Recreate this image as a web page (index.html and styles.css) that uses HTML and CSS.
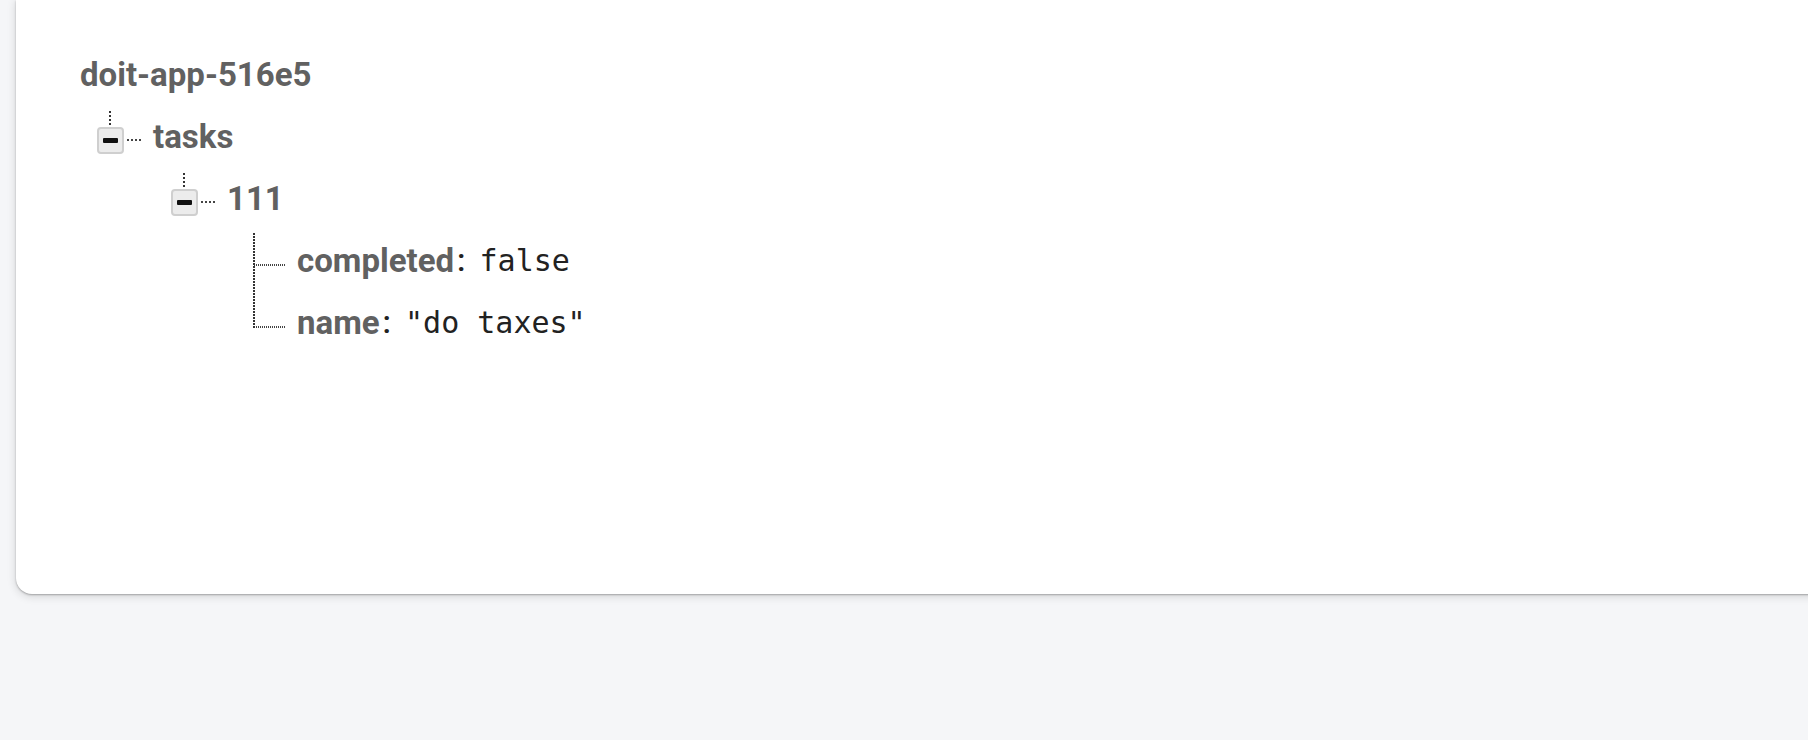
FILE: index.html
```html
<!DOCTYPE html>
<html lang="en">
<head>
<meta charset="utf-8">
<title>doit-app-516e5</title>
<link rel="stylesheet" href="styles.css">
</head>
<body>
<div class="page">
  <div class="card">
    <div class="tree">
      <div class="row root"><span class="key">doit-app-516e5</span></div>
      <ul class="children lvl1">
        <li>
          <div class="row"><span class="toggle"></span><span class="hline"></span><span class="key">tasks</span></div>
          <ul class="children lvl2">
            <li>
              <div class="row"><span class="toggle"></span><span class="hline"></span><span class="key">111</span></div>
              <ul class="leaves">
                <li class="row leaf"><span class="hline long"></span><span class="key">completed</span><span class="colon">:</span><span class="val">false</span></li>
                <li class="row leaf"><span class="hline long"></span><span class="key">name</span><span class="colon">:</span><span class="val">"do taxes"</span></li>
              </ul>
            </li>
          </ul>
        </li>
      </ul>
    </div>
  </div>
</div>
</body>
</html>
```
FILE: styles.css
```css
html, body {
  margin: 0;
  padding: 0;
  background: #f5f6f8;
  height: 100%;
  overflow: hidden;
}
.page {
  padding-left: 16px;
}
.card {
  background: #fff;
  height: 594px;
  margin-right: -40px;
  border-radius: 0 0 0 16px;
  box-shadow: 0 1px 2px rgba(0,0,0,0.28), 0 2px 8px 1px rgba(0,0,0,0.12);
  box-sizing: border-box;
  padding: 43px 0 0 64px;
  font-family: Roboto, "Liberation Sans", sans-serif;
}
.tree ul {
  list-style: none;
  margin: 0;
  padding: 0;
}
.row {
  display: flex;
  align-items: center;
  height: 62px;
}
.key {
  font-weight: 700;
  font-size: 33px;
  color: #616161;
}
.lvl1 {
  padding-left: 17px !important;
}
.lvl2 {
  padding-left: 74px !important;
}
.toggle {
  position: relative;
  width: 23px;
  height: 23px;
  margin-top: 8px;
  border: 2px solid #cfcfcf;
  border-radius: 4px;
  background: #ececec;
  display: flex;
  align-items: center;
  justify-content: center;
  flex: none;
}
.toggle::after {
  content: "";
  width: 15px;
  height: 5px;
  background: #111;
  border-radius: 1px;
}
.toggle::before {
  content: "";
  position: absolute;
  left: 10px;
  top: -18px;
  width: 2px;
  height: 16px;
  background: repeating-linear-gradient(to bottom, #333 0 2px, transparent 2px 4px);
}
.hline {
  width: 16px;
  height: 2px;
  margin: 8px 10px 0 3px;
  background: repeating-linear-gradient(to right, #444 0 2px, transparent 2px 4px);
  flex: none;
}
.leaves {
  position: relative;
  padding-left: 83px !important;
}
.leaves::before {
  content: "";
  position: absolute;
  left: 82px;
  top: 4px;
  bottom: 25px;
  width: 2px;
  background: repeating-linear-gradient(to bottom, #333 0 2px, transparent 2px 3px);
}
.hline.long {
  width: 32px;
  margin: 10px 11px 0 0;
  background: repeating-linear-gradient(to right, #444 0 1px, transparent 1px 2px);
}
.colon {
  font-size: 32px;
  font-weight: 500;
  color: #222;
  margin: 0 14px 0 3px;
}
.val {
  font-family: "DejaVu Sans Mono", "Liberation Mono", monospace;
  font-size: 30px;
  color: #222;
}
```
